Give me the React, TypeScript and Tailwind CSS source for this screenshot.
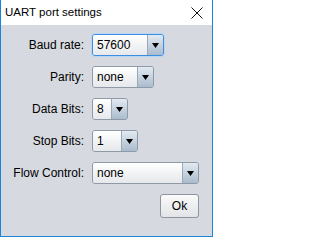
import React from 'react';

type ComboProps = {
  value: string;
  width: string;
  focused?: boolean;
};

function Combo({ value, width, focused }: ComboProps) {
  return (
    <div
      className={`flex h-[22px] ${width} rounded-[3px] border overflow-hidden ${
        focused
          ? 'border-[#3d8ee0] shadow-[0_0_0_1px_#b7d6f2]'
          : 'border-[#8e9aa6]'
      }`}
    >
      <div className="flex flex-1 items-center pl-[4px] bg-gradient-to-b from-white to-[#e6e8eb] text-[12px] text-black">
        {value}
      </div>
      <div className="flex w-[16px] items-center justify-center border-l border-[#9aa9b8] bg-gradient-to-b from-[#e3eaf1] to-[#a9bccd]">
        <svg width="7" height="5" viewBox="0 0 7 5">
          <path d="M0 0H7L3.5 5Z" fill="#000" />
        </svg>
      </div>
    </div>
  );
}

const rows: { label: string; value: string; width: string; focused?: boolean }[] = [
  { label: 'Baud rate:', value: '57600', width: 'w-[72px]', focused: true },
  { label: 'Parity:', value: 'none', width: 'w-[62px]' },
  { label: 'Data Bits:', value: '8', width: 'w-[36px]' },
  { label: 'Stop Bits:', value: '1', width: 'w-[46px]' },
  { label: 'Flow Control:', value: 'none', width: 'w-[107px]' },
];

export default function App() {
  return (
    <div
      className="flex h-[237px] w-[213px] flex-col border-x border-b border-[#1883d7] bg-[#d6d9df]"
      style={{ fontFamily: '"Liberation Sans", Arial, sans-serif' }}
    >
      <div className="flex h-[25px] items-center justify-between bg-white pl-[4px] pr-[9px]">
        <span className="text-[11.5px] text-black">UART port settings</span>
        <svg width="12" height="12" viewBox="0 0 12 12">
          <path d="M0.5 0.5L11.5 11.5M11.5 0.5L0.5 11.5" stroke="#111" strokeWidth="1" />
        </svg>
      </div>

      <div className="flex flex-col pl-[11px] pr-[13px] pt-[9px]">
        <div className="grid grid-cols-[72px_auto] items-center gap-x-[8px] gap-y-[10px]">
          {rows.map((row) => (
            <React.Fragment key={row.label}>
              <span className="text-right text-[12px] text-black">{row.label}</span>
              <Combo value={row.value} width={row.width} focused={row.focused} />
            </React.Fragment>
          ))}
        </div>
        <div className="mt-[10px] flex justify-end">
          <button className="h-[24px] w-[39px] rounded-[3px] border border-[#8e959c] bg-gradient-to-b from-[#fafafa] to-[#e2e4e7] text-[12px] text-black">
            Ok
          </button>
        </div>
      </div>
    </div>
  );
}
